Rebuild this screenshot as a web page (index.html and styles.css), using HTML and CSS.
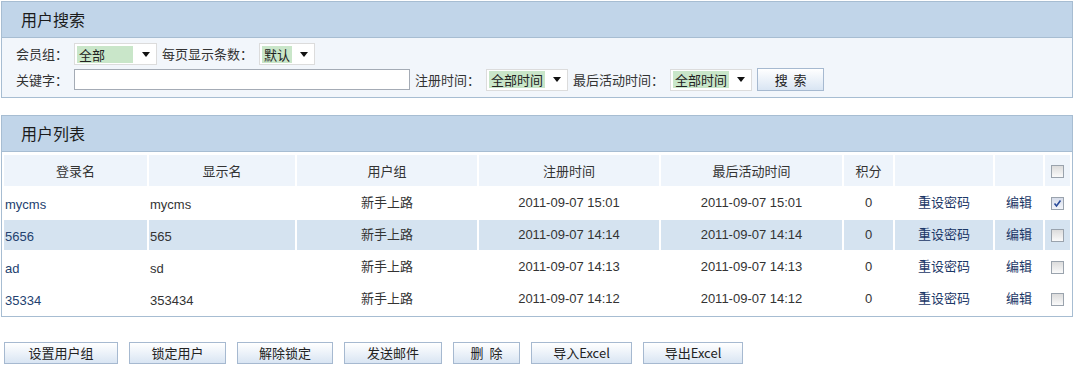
FILE: index.html
```html
<!DOCTYPE html>
<html lang="zh-CN">
<head>
    <meta charset="UTF-8">
    <title>用户管理</title>
    <link rel="stylesheet" href="styles.css">
</head>
<body>
    <div class="panel">
        <div class="panel-title">用户搜索</div>
        <div class="search-body">
            <div class="search-row">
                <span class="label">会员组：</span>
                <span class="select select-group"><span class="opt opt-wide">全部</span><span class="arrow"></span></span>
                <span class="label">每页显示条数：</span>
                <span class="select select-page"><span class="opt">默认</span><span class="arrow"></span></span>
            </div>
            <div class="search-row">
                <span class="label">关键字：</span>
                <input class="keyword" type="text">
                <span class="label">注册时间：</span>
                <span class="select select-time"><span class="opt">全部时间</span><span class="arrow"></span></span>
                <span class="label">最后活动时间：</span>
                <span class="select select-time"><span class="opt">全部时间</span><span class="arrow"></span></span>
                <button class="btn btn-search">搜&nbsp;&nbsp;索</button>
            </div>
        </div>
    </div>

    <div class="panel panel-list">
        <div class="panel-title">用户列表</div>
        <table class="user-table">
            <colgroup>
                <col style="width:143px">
                <col style="width:146px">
                <col style="width:180px">
                <col style="width:180px">
                <col style="width:181px">
                <col style="width:49px">
                <col style="width:98px">
                <col style="width:48px">
                <col style="width:25px">
            </colgroup>
            <tr class="head">
                <th>登录名</th>
                <th>显示名</th>
                <th>用户组</th>
                <th>注册时间</th>
                <th>最后活动时间</th>
                <th>积分</th>
                <th></th>
                <th></th>
                <th><span class="check"></span></th>
            </tr>
            <tr>
                <td class="left"><a class="login">mycms</a></td>
                <td class="left">mycms</td>
                <td class="cn">新手上路</td>
                <td>2011-09-07 15:01</td>
                <td>2011-09-07 15:01</td>
                <td>0</td>
                <td class="cn"><a class="action">重设密码</a></td>
                <td class="cn"><a class="action">编辑</a></td>
                <td><span class="check checked"><svg width="9" height="9" viewBox="0 0 9 9"><path d="M1.5 4.5 L3.5 7 L7.5 1.5" fill="none" stroke="#2b4c9a" stroke-width="1.6"/></svg></span></td>
            </tr>
            <tr class="hover">
                <td class="left"><a class="login">5656</a></td>
                <td class="left">565</td>
                <td class="cn">新手上路</td>
                <td>2011-09-07 14:14</td>
                <td>2011-09-07 14:14</td>
                <td>0</td>
                <td class="cn"><a class="action">重设密码</a></td>
                <td class="cn"><a class="action">编辑</a></td>
                <td><span class="check"></span></td>
            </tr>
            <tr>
                <td class="left"><a class="login">ad</a></td>
                <td class="left">sd</td>
                <td class="cn">新手上路</td>
                <td>2011-09-07 14:13</td>
                <td>2011-09-07 14:13</td>
                <td>0</td>
                <td class="cn"><a class="action">重设密码</a></td>
                <td class="cn"><a class="action">编辑</a></td>
                <td><span class="check"></span></td>
            </tr>
            <tr>
                <td class="left"><a class="login">35334</a></td>
                <td class="left">353434</td>
                <td class="cn">新手上路</td>
                <td>2011-09-07 14:12</td>
                <td>2011-09-07 14:12</td>
                <td>0</td>
                <td class="cn"><a class="action">重设密码</a></td>
                <td class="cn"><a class="action">编辑</a></td>
                <td><span class="check"></span></td>
            </tr>
        </table>
    </div>

    <div class="toolbar">
        <button class="btn" style="width:114px">设置用户组</button>
        <button class="btn" style="width:97px">锁定用户</button>
        <button class="btn" style="width:96px">解除锁定</button>
        <button class="btn" style="width:98px">发送邮件</button>
        <button class="btn" style="width:67px">删&nbsp;&nbsp;除</button>
        <button class="btn" style="width:101px">导入Excel</button>
        <button class="btn" style="width:100px">导出Excel</button>
    </div>
</body>
</html>
```

FILE: styles.css
```css
body {
    margin: 0;
    padding: 1px 0 0 1px;
    font-family: "Liberation Sans", "Noto Sans CJK SC", sans-serif;
    font-size: 13px;
    line-height: 16px;
    color: #333;
    background: #fff;
}

.panel {
    width: 1072px;
    box-sizing: border-box;
    border: 1px solid #a7bdd2;
}

.panel-list {
    margin-top: 17px;
    background: #fff;
}

.panel-title {
    height: 35px;
    line-height: 35px;
    padding-left: 19px;
    background: #c1d5e9;
    border-bottom: 1px solid #a7bdd2;
    font-family: "Noto Sans CJK SC", sans-serif;
    font-size: 16px;
    color: #1b1b1b;
}

/* search form */
.search-body {
    background: #f2f6fb;
    padding: 5px 14px 6px 14px;
}

.search-row {
    display: flex;
    align-items: center;
    height: 22px;
}

.search-row + .search-row {
    margin-top: 3px;
    height: 23px;
}

.label {
    font-family: "Noto Sans CJK SC", sans-serif;
    font-size: 13px;
    color: #333;
    margin-right: 6px;
    margin-left: 5px;
}

.search-row .label:first-child {
    margin-left: 0;
}

.select {
    display: flex;
    align-items: center;
    height: 22px;
    box-sizing: border-box;
    background: #fff;
    border: 1px solid #dcdcdc;
    padding-left: 2px;
}

.select-group { width: 83px; }
.select-page { width: 56px; }
.select-time { width: 82px; }

.opt {
    background: #c9e6c9;
    height: 17px;
    line-height: 17px;
    padding: 0 2px;
    font-family: "Noto Sans CJK SC", sans-serif;
    color: #222;
}

.opt-wide {
    width: 52px;
}

.arrow {
    margin-left: auto;
    margin-right: 6px;
    width: 0;
    height: 0;
    border-left: 4px solid transparent;
    border-right: 4px solid transparent;
    border-top: 5px solid #111;
}

.keyword {
    width: 336px;
    height: 21px;
    box-sizing: border-box;
    border: 1px solid #a4abb5;
    margin: 0;
    padding: 0;
    background: #fff;
}

.btn {
    height: 22px;
    box-sizing: border-box;
    border: 1px solid #a6b9d0;
    background: linear-gradient(#ffffff, #d9e5f3);
    font-family: "Noto Sans CJK SC", sans-serif;
    font-size: 13px;
    line-height: 16px;
    color: #222;
    padding: 0;
    cursor: pointer;
}

.btn-search {
    width: 67px;
    height: 23px;
    margin-left: 5px;
}

/* list */
.user-table {
    width: 100%;
    table-layout: fixed;
    border-spacing: 2px;
    margin-top: 1px;
}

.user-table tr {
    height: 30px;
}

.user-table tr.head {
    height: 31px;
}

.user-table th,
.user-table td {
    padding: 0 1px;
    text-align: center;
    vertical-align: middle;
    white-space: nowrap;
    overflow: hidden;
}

.user-table .head th {
    background: #eef4fb;
    font-family: "Noto Sans CJK SC", sans-serif;
    font-weight: normal;
    color: #333;
}

.user-table .left {
    text-align: left;
    padding-top: 3px;
}

.user-table .cn {
    font-family: "Noto Sans CJK SC", sans-serif;
    padding-bottom: 3px;
}

.user-table tr.hover td {
    background: #d5e3f0;
}

.login {
    color: #23416f;
}

.action {
    color: #1b3767;
}

.check {
    display: inline-flex;
    align-items: center;
    justify-content: center;
    width: 13px;
    height: 13px;
    box-sizing: border-box;
    border: 1px solid #9aa3ad;
    background: linear-gradient(#dcdcdc, #fafafa);
    vertical-align: middle;
}

.check.checked {
    background: linear-gradient(#d6dcea, #f4f6fb);
}

.toolbar {
    display: flex;
    gap: 11px;
    margin: 25px 0 0 3px;
}

.toolbar .btn {
    flex: none;
}
```
